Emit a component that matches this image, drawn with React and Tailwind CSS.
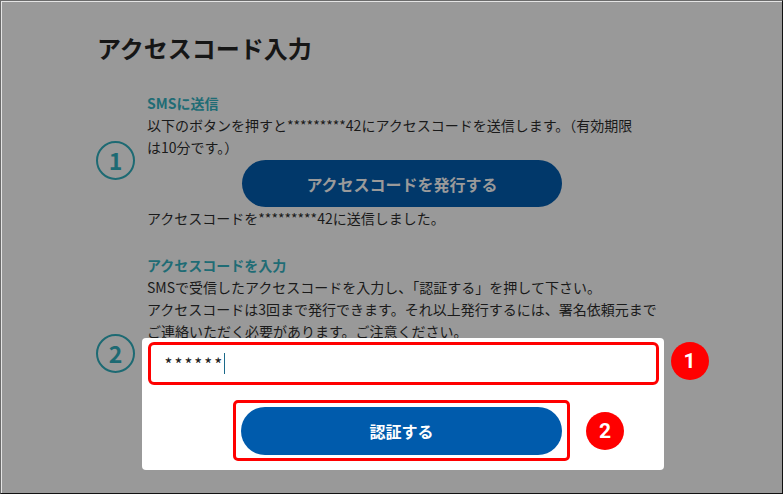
import React from "react";

const font = { fontFamily: '"Noto Sans CJK JP", "Noto Sans", sans-serif' };

export default function App() {
  return (
    <div
      className="w-[783px] h-[494px] bg-[#999999] border border-t-[#6b6b6b] border-l-[#6b6b6b] border-r-[#111111] border-b-[#111111] overflow-hidden"
      style={font}
    >
      <div className="h-full border-t border-l border-t-[#e4e4e4] border-l-[#e4e4e4] pl-[94px] pt-[30px] text-[#1a1a1a]">
        <h1 className="text-[24px] leading-[32px] font-bold text-[#161616] pl-[1px]">
          アクセスコード入力
        </h1>

        {/* Section 1 */}
        <div className="flex items-center gap-[12px] mt-[28px]">
          <div className="w-[39px] h-[39px] rounded-full border-2 border-[#1d6a73] flex items-center justify-center text-[#1d6a73] text-[23px] font-bold leading-none shrink-0">
            1
          </div>
          <div className="w-[512px] text-[14px] leading-[22px] whitespace-nowrap">
            <div className="text-[14px] leading-[22px] font-bold text-[#1f6c75]">SMSに送信</div>
            <div>以下のボタンを押すと*********42にアクセスコードを送信します。（有効期限</div>
            <div>は10分です。）</div>
            <div className="flex justify-center mt-[2px] pr-[2px]">
              <div className="w-[320px] h-[47px] rounded-full bg-[#01386a] flex items-center justify-center text-[16px] font-bold text-[#9a9a9a]">
                アクセスコードを発行する
              </div>
            </div>
            <div>アクセスコードを*********42に送信しました。</div>
          </div>
        </div>

        {/* Section 2 */}
        <div className="flex items-start gap-[12px] mt-[26px]">
          <div className="mt-[79px] w-[39px] h-[39px] rounded-full border-2 border-[#1d6a73] flex items-center justify-center text-[#1d6a73] text-[23px] font-bold leading-none shrink-0">
            2
          </div>
          <div className="w-[512px] text-[14px] leading-[22px] whitespace-nowrap">
            <div className="text-[14px] leading-[21px] font-bold text-[#1f6c75]">アクセスコードを入力</div>
            <div>SMSで受信したアクセスコードを入力し、「認証する」を押して下さい。</div>
            <div>アクセスコードは3回まで発行できます。それ以上発行するには、署名依頼元まで</div>
            <div>ご連絡いただく必要があります。ご注意ください。</div>

            <div className="relative -mt-[4px] -ml-[5px] w-[522px] h-[132px] bg-white rounded-[4px] pt-[4px] px-[5px] flex flex-col items-center">
              <div className="relative w-[511px] h-[43px] border-[3px] border-[#ff0000] rounded-[6px] bg-white flex items-center pl-[14px]">
                <span className="text-[17px] text-[#1a1a1a] tracking-[2px]">******</span>
                <span className="inline-block w-[1px] h-[21px] bg-[#1b6a8a]" />
                <div className="absolute left-[calc(100%+15px)] top-[-3px] w-[38px] h-[38px] rounded-full bg-[#ff0000] flex items-center justify-center text-white text-[21px] font-bold" style={{ fontFamily: 'Roboto, "Liberation Sans", sans-serif' }}>
                  1
                </div>
              </div>
              <div className="relative mt-[15px] w-[337px] h-[61px] border-[3px] border-[#ff0000] rounded-[5px] flex items-center justify-center mr-[3px]">
                <div className="w-[321px] h-[48px] rounded-full bg-[#005bac] flex items-center justify-center text-white text-[16px] font-bold">
                  認証する
                </div>
                <div className="absolute left-[calc(100%+19px)] top-[9px] w-[38px] h-[38px] rounded-full bg-[#ff0000] flex items-center justify-center text-white text-[21px] font-bold" style={{ fontFamily: 'Roboto, "Liberation Sans", sans-serif' }}>
                  2
                </div>
              </div>
            </div>
          </div>
        </div>
      </div>
    </div>
  );
}
